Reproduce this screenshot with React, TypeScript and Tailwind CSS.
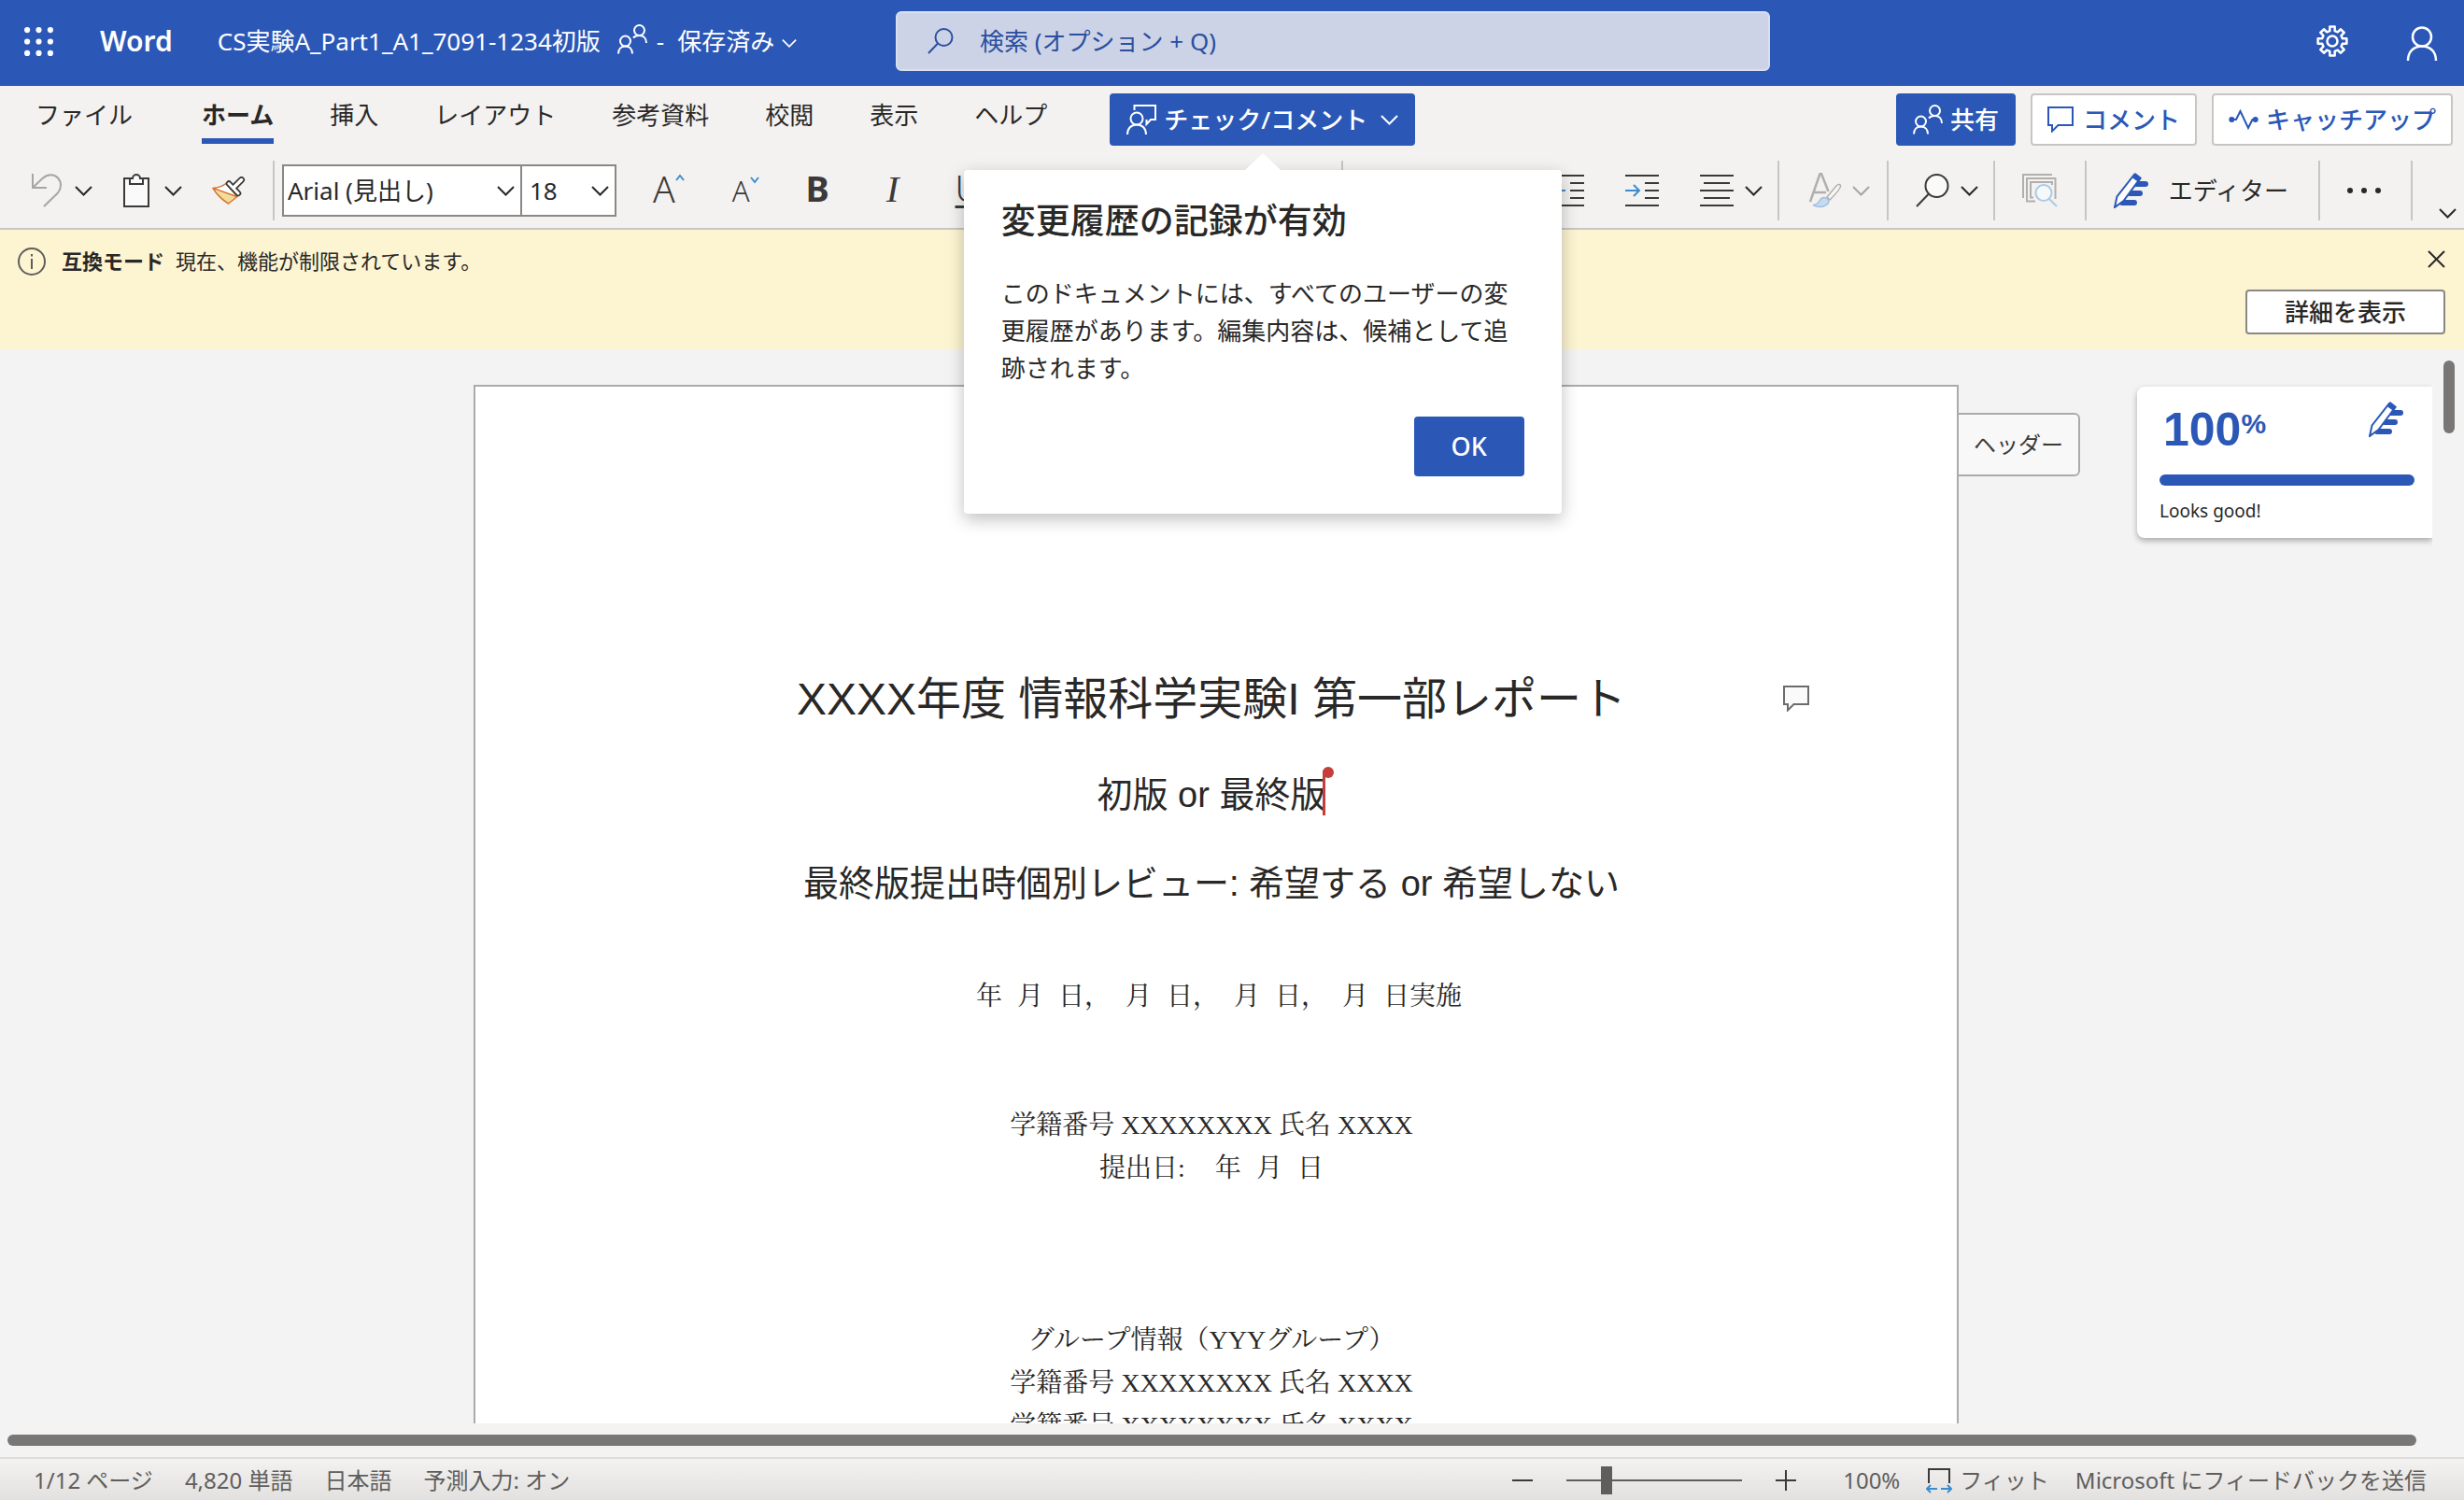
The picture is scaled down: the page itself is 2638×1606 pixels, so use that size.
import React from "react";

type IconProps = { className?: string };

function Chevron({ className = "" }: IconProps) {
  return (
    <svg width="19" height="11" viewBox="0 0 19 11" fill="none" stroke="currentColor" strokeWidth="2" className={`shrink-0 ${className}`}>
      <path d="M1 1L9.5 9.5L18 1" />
    </svg>
  );
}

function PeopleIcon({ className = "" }: IconProps) {
  return (
    <svg width="32" height="32" viewBox="0 0 32 32" fill="none" stroke="currentColor" strokeWidth="2" className={`shrink-0 ${className}`}>
      <circle cx="8.5" cy="18" r="5.5" />
      <path d="M1 31.500C1 26.500 4 23.500 8.500 23.500S16 26.500 16 31.500" />
      <circle cx="23.500" cy="6.500" r="5.500" />
      <path d="M17 14.500C18.500 12.800 20.700 12 23.500 12C28 12 31 15 31 20" />
    </svg>
  );
}

function PersonCommentIcon() {
  return (
    <svg width="32" height="32" viewBox="0 0 32 32" fill="none" stroke="currentColor" strokeWidth="2" className="shrink-0">
      <circle cx="11" cy="15" r="6.500" />
      <path d="M1 32C1 25.500 5 21.500 11 21.500S21 25.500 21 32" />
      <path d="M8.500 6V1H31V16H26L21.500 21V16" />
    </svg>
  );
}

function BubbleIcon({ fill = "none" }: { fill?: string }) {
  return (
    <svg width="28" height="28" viewBox="0 0 28 28" fill={fill} stroke="currentColor" strokeWidth="2" className="shrink-0">
      <path d="M1 1H27V20H11.500L5 26.500V20H1Z" />
    </svg>
  );
}

function PulseIcon() {
  return (
    <svg width="32" height="22" viewBox="0 0 32 22" fill="none" stroke="currentColor" strokeWidth="2" className="shrink-0">
      <circle cx="3.300" cy="11" r="3" fill="currentColor" stroke="none" />
      <circle cx="28.700" cy="11" r="3" fill="currentColor" stroke="none" />
      <path d="M3 11H8L12.500 2L21 20L25.500 11H29" />
    </svg>
  );
}

function SearchIcon() {
  return (
    <svg width="28" height="28" viewBox="0 0 28 28" fill="none" stroke="currentColor" strokeWidth="2" className="shrink-0">
      <circle cx="17.500" cy="10" r="9" />
      <path d="M11 16.500L1 27" />
    </svg>
  );
}

function GearIcon() {
  const points: string[] = [];
  for (let i = 0; i < 8; i++) {
    const base = (i * Math.PI) / 4;
    const corners: [number, number][] = [
      [-0.24, 11.2],
      [-0.17, 15.6],
      [0.17, 15.6],
      [0.24, 11.2],
    ];
    for (const [offset, radius] of corners) {
      points.push(`${17 + radius * Math.sin(base + offset)},${17 - radius * Math.cos(base + offset)}`);
    }
  }
  return (
    <svg width="34" height="34" viewBox="0 0 34 34" fill="none" stroke="currentColor" strokeWidth="2.5" strokeLinejoin="round">
      <polygon points={points.join(" ")} />
      <circle cx="17" cy="17" r="5.500" />
    </svg>
  );
}

function PersonIcon() {
  return (
    <svg width="34" height="37" viewBox="0 0 34 37" fill="none" stroke="currentColor" strokeWidth="2.5">
      <circle cx="17" cy="11.500" r="10" />
      <path d="M2 37C2 27.500 8 21.500 17 21.500S32 27.500 32 37" />
    </svg>
  );
}

function WaffleIcon() {
  const at = [3, 15, 27];
  return (
    <svg width="31" height="31" viewBox="0 0 30 30" fill="currentColor">
      {at.map((y) => at.map((x) => <circle key={`${x}-${y}`} cx={x} cy={y} r="3" />))}
    </svg>
  );
}

function UndoIcon() {
  return (
    <svg width="33" height="36" viewBox="0 0 33 36" fill="none" stroke="currentColor" strokeWidth="2">
      <path d="M1 0V15H16M1.500 14.500L11.500 5C17 0 24 0 28 4.500C32 9 32 15.500 28 20.500L13 35" />
    </svg>
  );
}

function ClipboardIcon() {
  return (
    <svg width="28" height="36" viewBox="0 0 28 36" fill="#fafafa" stroke="#3b3a39" strokeWidth="2">
      <path d="M1 5H27V35H1Z" />
      <path d="M7 5V11H21V5H18A4 4 0 0 0 10 5Z" />
    </svg>
  );
}

function FormatPainterIcon() {
  return (
    <svg width="36" height="31" viewBox="0 0 36 31" fill="none" strokeLinejoin="round" strokeLinecap="round">
      <path d="M1 12.500C6 12 11 10.500 15 7.500L27 21.500L17.500 29C11 25 5 19 1 12.500Z" fill="#fff" />
      <path d="M4 15L26.500 21.500L17.500 29C12 25.500 7.500 21 4 15Z" fill="#f2dc9b" />
      <path d="M1 12.500C6 12 11 10.500 15 7.500L27 21.500L17.500 29C11 25 5 19 1 12.500ZL26.500 21.500" stroke="#d8752c" strokeWidth="1.500" />
      <path d="M31.500 3.500L23 12" stroke="#3b3a39" strokeWidth="7" />
      <path d="M18 7.500L28 18" stroke="#3b3a39" strokeWidth="6.500" />
      <path d="M31.500 3.500L23 12" stroke="#fff" strokeWidth="3.500" />
      <path d="M18 7.500L28 18" stroke="#fff" strokeWidth="3" />
    </svg>
  );
}

function IndentIcon({ decrease = false }: { decrease?: boolean }) {
  return (
    <svg width="36" height="36" viewBox="0 0 36 36" fill="none" stroke="#3b3a39" strokeWidth="2" className="shrink-0">
      <path d="M0 2H36M21 10H36M21 18H36M21 26H36M0 34H36" />
      <path d={decrease ? "M16 18H1M7 12L1 18L7 24" : "M0 18H15M9 12L15 18L9 24"} stroke="#3a8dd0" />
    </svg>
  );
}

function AlignIcon() {
  return (
    <svg width="36" height="36" viewBox="0 0 36 36" fill="none" stroke="#3b3a39" strokeWidth="2" className="shrink-0">
      <path d="M0 2H36M4 10H32M0 18H36M4 26H32M0 34H36" />
    </svg>
  );
}

function StylesIcon() {
  return (
    <svg width="36" height="38" viewBox="0 0 36 38" fill="none" stroke="#b1afad" strokeWidth="2">
      <path d="M1 31L11.500 1H13L20.500 20M5 21H18" strokeWidth="2.500" />
      <path d="M19 26L29 14C31 12 34 12 33.500 14.500C33 18 27 24 22 29Z" fill="#f8f7f6" strokeWidth="1.500" />
      <path d="M4 34.500C8 34.500 10 32 12 28.500C14 25.500 18.500 26 20.500 29C22.500 33 16 37 11 36.500C8 36.500 6 35.500 4 34.500Z" fill="#c6d9ef" stroke="#a3c0e2" strokeWidth="1.500" />
    </svg>
  );
}

function FindIcon() {
  return (
    <svg width="36" height="36" viewBox="0 0 36 36" fill="none" stroke="#3b3a39" strokeWidth="2">
      <circle cx="22.500" cy="13" r="12" fill="#fafafa" />
      <path d="M13.500 22L1 35" />
    </svg>
  );
}

function ImageSearchIcon() {
  return (
    <svg width="38" height="36" viewBox="0 0 38 36" fill="none" stroke="#b1afad" strokeWidth="2">
      <path d="M1 26V1H32" />
      <path d="M14 29.500H5V5H35.500V27" />
      <path d="M12 25.500H9V9H32V12" />
      <circle cx="23" cy="20.500" r="8.500" fill="#f6f8fa" stroke="#a9cbe8" />
      <path d="M29 27L37 35" stroke="#a9cbe8" />
    </svg>
  );
}

function EditorIcon() {
  return (
    <svg width="37" height="38" viewBox="0 0 37 38" fill="none" stroke="#2b58b7" className="shrink-0">
      <path d="M24 12H34M17 22H28M9 32H22" strokeWidth="6" strokeLinecap="round" />
      <path d="M1 37L3.500 25.500L22 2L28 6.500L10.500 30Z" fill="#fff" strokeWidth="2" />
      <path d="M23 0L30 5.500L26.500 10L19.500 5Z" fill="#2b58b7" stroke="none" />
    </svg>
  );
}

function FitIcon() {
  return (
    <svg width="28" height="28" viewBox="0 0 28 28" fill="none" strokeWidth="2" className="shrink-0">
      <path d="M3 17V2H25V17" stroke="#3b3a39" />
      <path d="M12 23H1M5 19L1 23L5 27M16 23H27M23 19L27 23L23 27" stroke="#3a8dd0" />
    </svg>
  );
}

function Divider({ className = "" }: IconProps) {
  return <div className={`h-16 w-0.5 shrink-0 bg-[#c8c6c4] ${className}`} />;
}

function ToolButton({ label, className = "", children }: { label: string; className?: string; children: React.ReactNode }) {
  return (
    <button type="button" aria-label={label} className={`flex shrink-0 items-center justify-center leading-none ${className}`}>
      {children}
    </button>
  );
}

function TitleBar() {
  return (
    <header className="flex h-[92px] shrink-0 items-center bg-[#2b58b7] pr-7 text-white">
      <div className="flex w-[959px] shrink-0 items-center pb-1 pl-[26px]">
        <button type="button" aria-label="アプリ起動ツール">
          <WaffleIcon />
        </button>
        <a href="#word" className="ml-[50px] text-[30px] leading-10 font-semibold">
          Word
        </a>
        <button type="button" className="ml-12 flex items-center whitespace-nowrap">
          <span className="text-[26px] leading-10">CS実験A_Part1_A1_7091-1234初版</span>
          <PeopleIcon className="mr-2.5 mb-1 ml-[18px]" />
          <span className="text-[26px] leading-10">-</span>
          <span className="ml-3.5 text-[26px] leading-10">保存済み</span>
          <Chevron className="mt-1 ml-2 w-4" />
        </button>
      </div>
      <label className="mb-1 flex h-16 max-w-[936px] flex-1 items-center rounded-md border-2 border-[#d9dff0] bg-[#cdd3e6] px-8 text-[#2a4fa0]">
        <SearchIcon />
        <input type="search" aria-label="検索" placeholder="検索 (オプション + Q)" className="ml-7 w-full bg-transparent text-[26px] leading-10 outline-none placeholder:text-[#2a4fa0]" />
      </label>
      <div className="ml-auto flex items-center gap-[62px]">
        <button type="button" aria-label="設定" className="pb-1">
          <GearIcon />
        </button>
        <button type="button" aria-label="アカウント">
          <PersonIcon />
        </button>
      </div>
    </header>
  );
}

function TrackChangesCallout() {
  return (
    <div role="dialog" aria-labelledby="callout-title" className="absolute top-[82px] left-1/2 z-50 w-[640px] -translate-x-1/2 rounded bg-white px-10 pt-7 pb-10 whitespace-normal text-[#292827] shadow-[0_6px_18px_rgba(0,0,0,0.25)]">
      <svg width="38" height="18" viewBox="0 0 38 18" className="absolute -top-[18px] left-1/2 -translate-x-1/2">
        <path d="M0 18L19 0L38 18Z" fill="#fff" />
      </svg>
      <h2 id="callout-title" className="text-[37px] leading-[52px] font-medium">
        変更履歴の記録が有効
      </h2>
      <p className="mt-8 text-[26px] leading-10">このドキュメントには、すべてのユーザーの変更履歴があります。編集内容は、候補として追跡されます。</p>
      <div className="mt-8 flex justify-end">
        <button type="button" className="h-16 rounded bg-[#2b58b7] px-10 text-[27px] font-medium text-white">
          OK
        </button>
      </div>
    </div>
  );
}

function TabRow() {
  const tabs = ["挿入", "レイアウト", "参考資料", "校閲", "表示", "ヘルプ"];
  return (
    <div className="flex h-[72px] items-center pr-3 pl-[38px] text-[26px] whitespace-nowrap">
      <nav className="flex gap-[60px]">
        <button type="button" className="mr-3.5 h-[52px] border-b-[6px] border-transparent pb-1">
          ファイル
        </button>
        <button type="button" className="h-[52px] border-b-[6px] border-[#2b58b7] pb-1 font-bold">
          ホーム
        </button>
        {tabs.map((tab) => (
          <button key={tab} type="button" className="h-[52px] border-b-[6px] border-transparent pb-1">
            {tab}
          </button>
        ))}
      </nav>
      <div className="relative ml-[67px]">
        <button type="button" className="flex h-14 items-center rounded bg-[#2b58b7] px-[18px] font-medium text-white">
          <PersonCommentIcon />
          <span className="ml-2">チェック/コメント</span>
          <Chevron className="ml-3.5" />
        </button>
        <TrackChangesCallout />
      </div>
      <div className="ml-auto flex gap-4 font-medium text-[#2b58b7]">
        <button type="button" className="flex h-14 items-center gap-2 rounded bg-[#2b58b7] px-[18px] text-white">
          <PeopleIcon />
          共有
        </button>
        <button type="button" className="flex h-14 items-center gap-2.5 rounded border-2 border-[#c8c6c4] bg-white px-4">
          <BubbleIcon />
          コメント
        </button>
        <button type="button" className="flex h-14 items-center gap-2 rounded border-2 border-[#c8c6c4] bg-white px-4">
          <PulseIcon />
          キャッチアップ
        </button>
      </div>
    </div>
  );
}

function Toolbar() {
  return (
    <div className="flex h-20 items-center pl-[34px] text-[#292827]">
      <ToolButton label="元に戻す" className="text-[#a8a6a4]">
        <UndoIcon />
      </ToolButton>
      <ToolButton label="元に戻すオプション" className="ml-[13px]">
        <Chevron />
      </ToolButton>
      <ToolButton label="貼り付け" className="ml-[33px]">
        <ClipboardIcon />
      </ToolButton>
      <ToolButton label="貼り付けオプション" className="ml-4">
        <Chevron />
      </ToolButton>
      <ToolButton label="書式のコピー" className="ml-8">
        <FormatPainterIcon />
      </ToolButton>
      <Divider className="ml-[29px]" />
      <div className="ml-2 flex h-14 shrink-0 border-2 border-[#8a8886] bg-white text-[26px]">
        <label className="relative flex w-[255px] items-center border-r-2 border-[#8a8886]">
          <select aria-label="フォント" className="h-full w-full appearance-none bg-transparent pl-1 outline-none">
            <option>Arial (見出し)</option>
          </select>
          <Chevron className="pointer-events-none absolute right-1.5" />
        </label>
        <label className="relative flex w-[99px] items-center">
          <select aria-label="フォント サイズ" className="h-full w-full appearance-none bg-transparent pl-2 outline-none">
            <option>18</option>
          </select>
          <Chevron className="pointer-events-none absolute right-1.5" />
        </label>
      </div>
      <ToolButton label="フォント サイズの拡大" className="ml-[39px] items-start pb-1.5 text-[#3b3a39]">
        <span className="text-[39px] font-light">A</span>
        <svg width="10" height="8" viewBox="0 0 10 8" fill="none" stroke="#3a8dd0" strokeWidth="2" className="mt-1">
          <path d="M1 7L5 2L9 7" />
        </svg>
      </ToolButton>
      <ToolButton label="フォント サイズの縮小" className="ml-[51px] items-start text-[#3b3a39]">
        <span className="text-[31px] font-light">A</span>
        <svg width="10" height="8" viewBox="0 0 10 8" fill="none" stroke="#3a8dd0" strokeWidth="2">
          <path d="M1 1L5 6L9 1" />
        </svg>
      </ToolButton>
      <ToolButton label="太字" className="ml-[50px] pb-1.5 text-[38px] font-bold text-[#3b3a39]">
        B
      </ToolButton>
      <ToolButton label="斜体" className="ml-[61px] pb-1 font-['Liberation_Serif',serif] text-[41px] text-[#3b3a39] italic">
        I
      </ToolButton>
      <ToolButton label="下線" className="ml-[60px] pb-1.5 text-[38px] font-light text-[#3b3a39] underline underline-offset-4">
        U
      </ToolButton>
      <Divider className="ml-[386px]" />
      <ToolButton label="インデントを減らす" className="ml-[222px]">
        <IndentIcon decrease />
      </ToolButton>
      <ToolButton label="インデントを増やす" className="ml-11">
        <IndentIcon />
      </ToolButton>
      <ToolButton label="中央揃え" className="ml-11">
        <AlignIcon />
        <Chevron className="ml-3" />
      </ToolButton>
      <div className="ml-auto flex items-center">
        <Divider />
        <ToolButton label="スタイル" className="ml-8 text-[#a8a6a4]">
          <StylesIcon />
          <Chevron className="ml-2.5" />
        </ToolButton>
        <Divider className="ml-[18px]" />
        <ToolButton label="検索と置換" className="ml-[29px]">
          <FindIcon />
          <Chevron className="ml-3" />
        </ToolButton>
        <Divider className="ml-4" />
        <ToolButton label="再利用" className="ml-[29px]">
          <ImageSearchIcon />
        </ToolButton>
        <Divider className="ml-[29px]" />
        <button type="button" className="ml-[29px] flex items-center gap-[22px] text-[26px] whitespace-nowrap">
          <EditorIcon />
          エディター
        </button>
        <Divider className="ml-8" />
        <ToolButton label="その他のオプション" className="ml-[29px]">
          <svg width="36" height="6" viewBox="0 0 36 6" fill="#292827">
            <circle cx="3" cy="3" r="3" />
            <circle cx="18" cy="3" r="3" />
            <circle cx="33" cy="3" r="3" />
          </svg>
        </ToolButton>
        <Divider className="ml-8" />
        <ToolButton label="リボンの表示オプション" className="mr-2 ml-7 self-end pb-0.5">
          <Chevron />
        </ToolButton>
      </div>
    </div>
  );
}

function InfoBar() {
  return (
    <div role="status" className="flex h-32 shrink-0 items-start justify-between bg-[#fdf4d2] pt-4 pr-5 pl-[19px] text-[22px] text-[#292827]">
      <div className="flex items-center whitespace-nowrap">
        <svg width="30" height="36" viewBox="0 0 30 36" fill="none" stroke="#605e5c" strokeWidth="2">
          <circle cx="15" cy="18" r="14" />
          <path d="M15 15V26M15 10V12.500" />
        </svg>
        <div className="ml-[17px] flex gap-3 pb-0.5 leading-8">
          <strong>互換モード</strong>
          <span>現在、機能が制限されています。</span>
        </div>
      </div>
      <div className="flex flex-col items-end">
        <button type="button" aria-label="閉じる" className="mt-1.5">
          <svg width="19" height="19" viewBox="0 0 19 19" fill="none" stroke="#292827" strokeWidth="2">
            <path d="M1 1L18 18M18 1L1 18" />
          </svg>
        </button>
        <button type="button" className="mt-[23px] h-12 rounded border-2 border-[#8a8886] bg-white px-10 text-[26px] font-medium">
          詳細を表示
        </button>
      </div>
    </div>
  );
}

function StudentLine() {
  return <p>学籍番号 XXXXXXXX 氏名 XXXX</p>;
}

function DocumentPage() {
  return (
    <article className="relative w-[1590px] shrink-0 border-2 border-b-0 border-[#ababab] bg-white pt-[303px] pr-2.5 text-center text-[#292827]">
      <div className="font-['Liberation_Sans','Noto_Sans_CJK_JP',sans-serif]">
        <h1 className="text-[48px] leading-16">XXXX年度 情報科学実験I 第一部レポート</h1>
        <h2 className="mt-[42px] text-[38px] leading-14">
          初版 or{" "}
          <span className="relative inline-block">
            最終版
            <span className="absolute top-0.5 right-0 h-[48px] w-[3px] bg-[#c43e3b]">
              <span className="absolute -top-1 left-0 h-3 w-3 rounded-full bg-[#c43e3b]" />
            </span>
          </span>
        </h2>
        <h2 className="mt-[39px] text-[38px] leading-14">最終版提出時個別レビュー: 希望する or 希望しない</h2>
      </div>
      <div className="mt-[70px] font-['Liberation_Serif','Noto_Serif_CJK_JP','Noto_Sans_CJK_JP',serif] text-[28px] leading-[46px]">
        <p className="flex justify-center gap-4 pl-4">
          <span>年</span>
          <span>月</span>
          <span>日，</span>
          <span>月</span>
          <span>日，</span>
          <span>月</span>
          <span>日，</span>
          <span>月</span>
          <span>日実施</span>
        </p>
        <div className="mt-[92px]">
          <StudentLine />
          <p className="flex justify-center gap-4">
            <span className="mr-4">提出日:</span>
            <span>年</span>
            <span>月</span>
            <span>日</span>
          </p>
        </div>
        <div className="mt-[138px]">
          <p>グループ情報（YYYグループ）</p>
          <StudentLine />
          <StudentLine />
        </div>
      </div>
      <button type="button" aria-label="コメントを表示" className="absolute top-80 right-[158px] text-[#6e6c6a]">
        <BubbleIcon fill="#fafafa" />
      </button>
      <button type="button" className="absolute top-7 left-full h-[68px] rounded-r-md border-2 border-[#ababab] bg-[#f8f8f8] px-4 text-[24px] whitespace-nowrap text-[#3b3a39]">
        ヘッダー
      </button>
    </article>
  );
}

function EditorCard() {
  return (
    <aside className="absolute top-10 right-0 h-[162px] w-[316px] rounded-l-lg bg-white pt-4 pr-[19px] pl-6 text-[#2b58b7] shadow-[0_3px_6px_rgba(0,0,0,0.3)]">
      <div className="flex items-start justify-between pr-3">
        <p className="flex items-start pl-1 font-['Liberation_Sans',sans-serif] font-bold">
          <span className="text-[50px] leading-[60px]">100</span>
          <span className="pt-1 text-[30px] leading-10">%</span>
        </p>
        <EditorIcon />
      </div>
      <div role="progressbar" aria-valuenow={100} aria-label="エディター スコア" className="mt-[18px] h-3 rounded-full bg-[#2b58b7]" />
      <p className="mt-3 text-[19px] leading-[30px] text-[#292827]">Looks good!</p>
    </aside>
  );
}

function StatusBar() {
  return (
    <footer className="flex h-[46px] shrink-0 items-center justify-between border-t-2 border-[#dedddc] bg-linear-to-b from-[#f3f2f1] to-[#e3e1df] pt-0.5 pr-10 pl-9 text-[24px] whitespace-nowrap text-[#605e5c]">
      <div className="flex gap-[34px]">
        <button type="button">1/12 ページ</button>
        <button type="button">4,820 単語</button>
        <button type="button">日本語</button>
        <button type="button">予測入力: オン</button>
      </div>
      <div className="flex items-center">
        <button type="button" aria-label="縮小" className="flex h-6 w-[22px] items-center">
          <span className="h-0.5 w-full bg-[#3b3a39]" />
        </button>
        <input
          type="range"
          aria-label="ズーム"
          min={10}
          max={440}
          defaultValue={100}
          className="mx-9 h-[30px] w-[188px] appearance-none bg-linear-to-r from-[#605e5c] to-[#605e5c] bg-size-[100%_2px] bg-center bg-no-repeat [&::-webkit-slider-thumb]:h-[30px] [&::-webkit-slider-thumb]:w-3 [&::-webkit-slider-thumb]:appearance-none [&::-webkit-slider-thumb]:bg-[#605e5c]"
        />
        <button type="button" aria-label="拡大">
          <svg width="22" height="22" viewBox="0 0 22 22" stroke="#3b3a39" strokeWidth="2">
            <path d="M0 11H22M11 0V22" />
          </svg>
        </button>
        <button type="button" className="ml-[50px]">
          100%
        </button>
        <button type="button" className="ml-7 flex items-center gap-2">
          <FitIcon />
          フィット
        </button>
        <button type="button" className="ml-7">
          Microsoft にフィードバックを送信
        </button>
      </div>
    </footer>
  );
}

export default function App() {
  return (
    <div lang="ja" className="flex h-screen flex-col overflow-hidden bg-[#f3f3f3] font-['Noto_Sans','Noto_Sans_CJK_JP',sans-serif] text-[#292827]">
      <TitleBar />
      <div className="relative z-10 shrink-0 border-b-2 border-[#c8c6c4] bg-[#f3f2f1]">
        <TabRow />
        <Toolbar />
      </div>
      <InfoBar />
      <div className="flex min-h-0 flex-1">
        <main className="relative flex flex-1 justify-center overflow-hidden pt-[38px]">
          <DocumentPage />
          <EditorCard />
        </main>
        <div className="w-[34px] shrink-0 px-3 pt-3">
          <div className="h-[78px] w-3 rounded-full bg-[#797775]" />
        </div>
      </div>
      <div className="h-9 shrink-0 pt-3 pr-[51px] pl-2">
        <div className="h-3 rounded-full bg-[#797775]" />
      </div>
      <StatusBar />
    </div>
  );
}
